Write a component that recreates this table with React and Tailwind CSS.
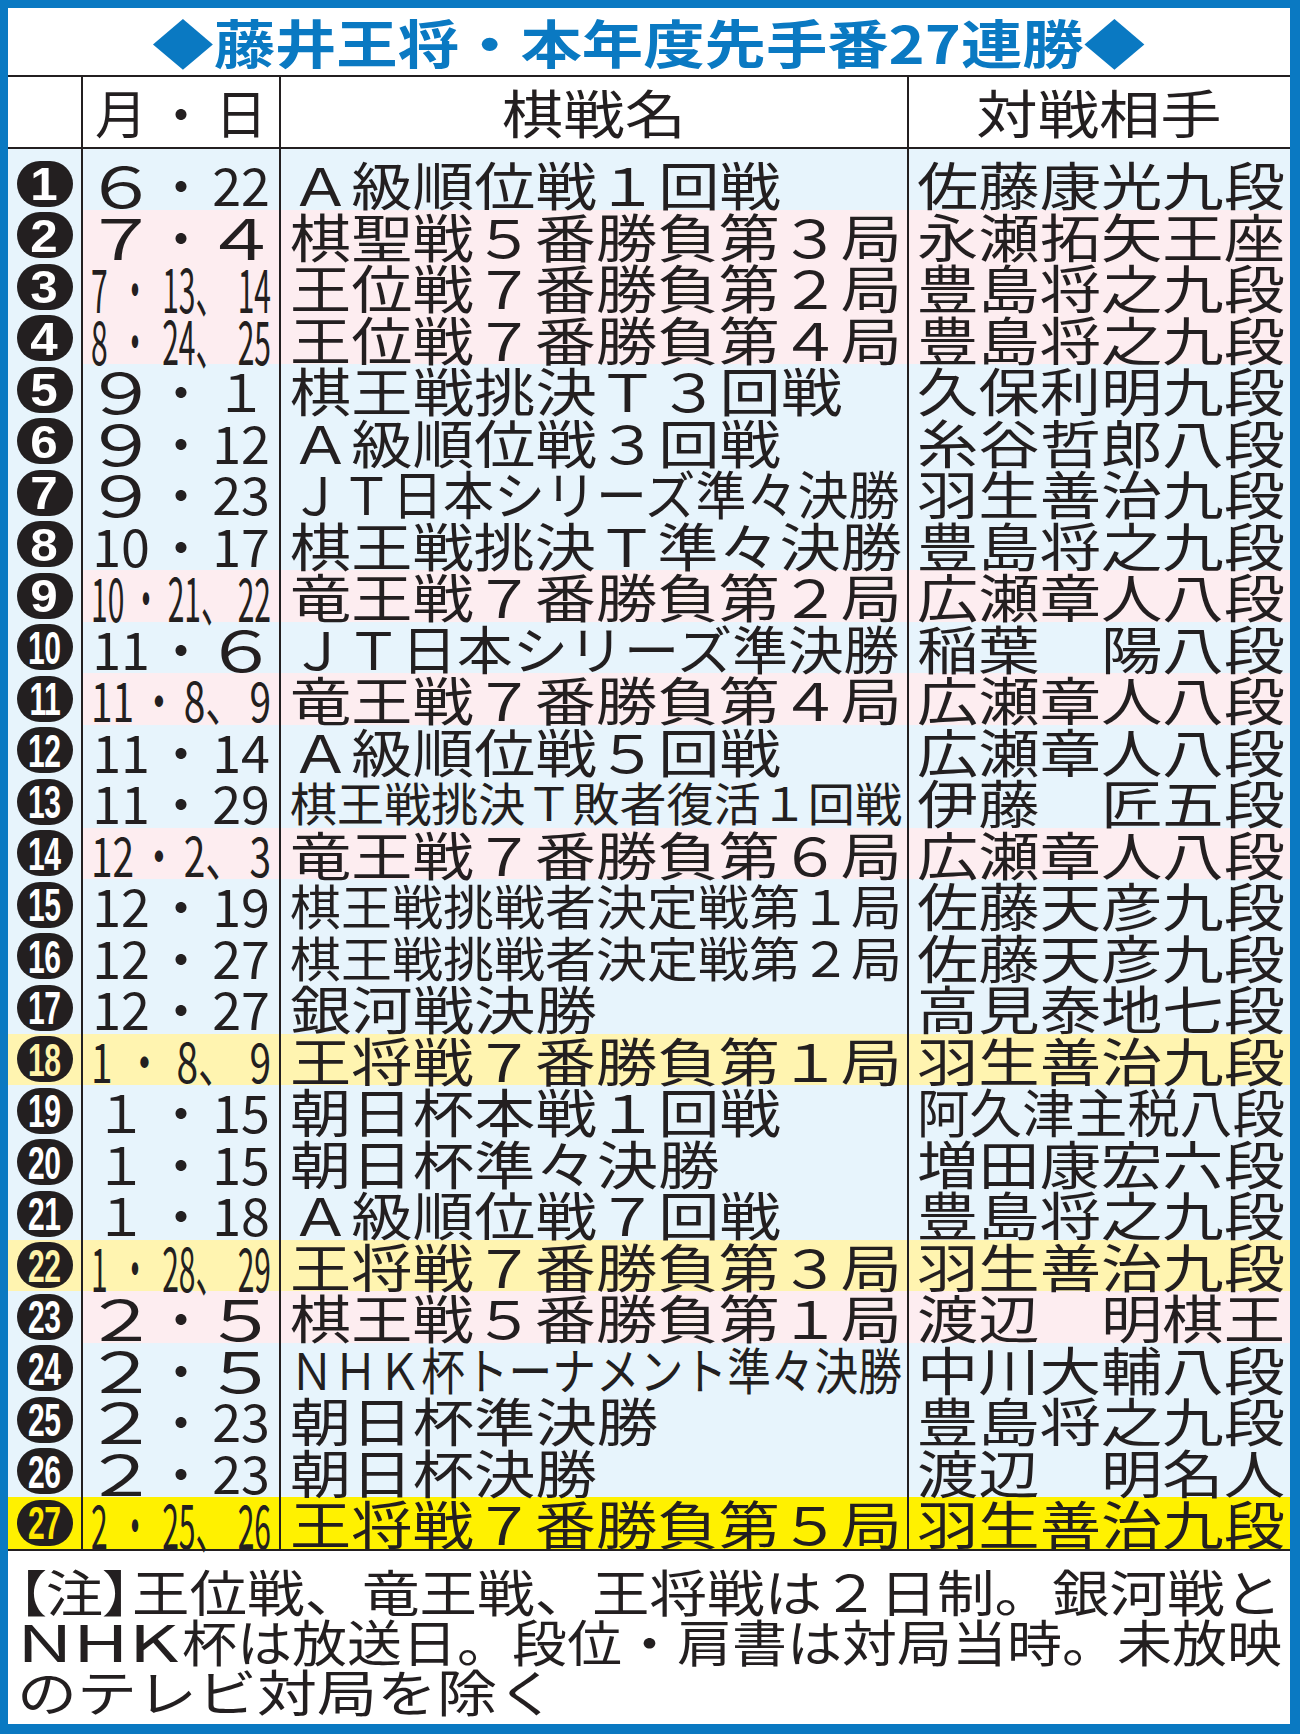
import React from "react";

const ROWS = [
  { n: 1, d: ["６", "22"], e: "Ａ級順位戦１回戦", o: "佐藤康光九段" },
  { n: 2, d: ["７", "４"], e: "棋聖戦５番勝負第３局", o: "永瀬拓矢王座", bg: "p" },
  { n: 3, d2: ["7", "13", "14"], k: "t", e: "王位戦７番勝負第２局", o: "豊島将之九段", bg: "p" },
  { n: 4, d2: ["8", "24", "25"], k: "t", e: "王位戦７番勝負第４局", o: "豊島将之九段", bg: "p" },
  { n: 5, d: ["９", "１"], e: "棋王戦挑決Ｔ３回戦", o: "久保利明九段" },
  { n: 6, d: ["９", "12"], e: "Ａ級順位戦３回戦", o: "糸谷哲郎八段" },
  { n: 7, d: ["９", "23"], e: "ＪＴ日本シリーズ準々決勝", o: "羽生善治九段" },
  { n: 8, d: ["10", "17"], e: "棋王戦挑決Ｔ準々決勝", o: "豊島将之九段" },
  { n: 9, d2: ["10", "21", "22"], k: "t", e: "竜王戦７番勝負第２局", o: "広瀬章人八段", bg: "p" },
  { n: 10, d: ["11", "６"], e: "ＪＴ日本シリーズ準決勝", o: "稲葉　陽八段" },
  { n: 11, d2: ["11", "8", "9"], k: "m", e: "竜王戦７番勝負第４局", o: "広瀬章人八段", bg: "p" },
  { n: 12, d: ["11", "14"], e: "Ａ級順位戦５回戦", o: "広瀬章人八段" },
  { n: 13, d: ["11", "29"], e: "棋王戦挑決Ｔ敗者復活１回戦", fs: 46, o: "伊藤　匠五段" },
  { n: 14, d2: ["12", "2", "3"], k: "m", e: "竜王戦７番勝負第６局", o: "広瀬章人八段", bg: "p" },
  { n: 15, d: ["12", "19"], e: "棋王戦挑戦者決定戦第１局", fs: 48, o: "佐藤天彦九段" },
  { n: 16, d: ["12", "27"], e: "棋王戦挑戦者決定戦第２局", fs: 48, o: "佐藤天彦九段" },
  { n: 17, d: ["12", "27"], e: "銀河戦決勝", o: "高見泰地七段" },
  { n: 18, d2: ["1", "8", "9"], k: "m", e: "王将戦７番勝負第１局", o: "羽生善治九段", bg: "y" },
  { n: 19, d: ["１", "15"], e: "朝日杯本戦１回戦", o: "阿久津主税八段" },
  { n: 20, d: ["１", "15"], e: "朝日杯準々決勝", o: "増田康宏六段" },
  { n: 21, d: ["１", "18"], e: "Ａ級順位戦７回戦", o: "豊島将之九段" },
  { n: 22, d2: ["1", "28", "29"], k: "t", e: "王将戦７番勝負第３局", o: "羽生善治九段", bg: "y" },
  { n: 23, d: ["２", "５"], e: "棋王戦５番勝負第１局", o: "渡辺　明棋王", bg: "p" },
  { n: 24, d: ["２", "５"], e: "ＮＨＫ杯トーナメント準々決勝", fs: 50, o: "中川大輔八段" },
  { n: 25, d: ["２", "23"], e: "朝日杯準決勝", o: "豊島将之九段" },
  { n: 26, d: ["２", "23"], e: "朝日杯決勝", o: "渡辺　明名人" },
  { n: 27, d2: ["2", "25", "26"], k: "t", e: "王将戦７番勝負第５局", o: "羽生善治九段", bg: "Y" },
];

const BG = {
  b: "bg-[#e7f4fc]",
  p: "bg-[#fdedf0]",
  y: "bg-[#fff4b0]",
  Y: "bg-[#fff100]",
};

const FS = {
  46: "text-[46px]",
  48: "text-[48px]",
  50: "text-[50px]",
  52: "text-[52px]",
};

const KIND = {
  t: "w-[360px] scale-x-[0.5] text-[60px]",
  m: "w-[250px] scale-x-[0.72] text-[54px]",
};

const GRID = "grid grid-cols-[73px_198px_628px_383px]";
const LINE = "border-l-2 border-[#231f20]";

function Circle({ n, bg }) {
  const numColor =
    bg === "Y" ? "text-[#ffe800]" : bg === "y" ? "text-[#fff3a8]" : "text-white";
  const squeeze = n >= 10 ? "scale-x-[0.64] tracking-[-1px]" : "scale-x-[1.05]";
  return (
    <div className="flex h-full items-center justify-center">
      <div className="flex h-[46px] w-[56px] items-center justify-center overflow-visible rounded-full bg-[#231f20]">
        <span
          className={`inline-block font-['Liberation_Sans',sans-serif] text-[47px] font-bold leading-none ${numColor} ${squeeze}`}
        >
          {n}
        </span>
      </div>
    </div>
  );
}

function Slot({ c, plain }) {
  const wide = !plain && c.length === 1 && c !== "１";
  return (
    <span className="flex justify-center">
      {wide ? <span className="inline-block scale-x-[1.45] scale-y-[1.08]">{c}</span> : c}
    </span>
  );
}

function DateA({ m, d, plain }) {
  return (
    <div className="grid h-full grid-cols-3 items-center px-2 text-[52px] leading-[51.5px]">
      <Slot c={m} plain={plain} />
      <span className="flex justify-center">・</span>
      <Slot c={d} plain={plain} />
    </div>
  );
}

function DateB({ m, d1, d2, k }) {
  return (
    <div className="flex h-full items-center px-2 leading-[51.5px]">
      <div className={`flex shrink-0 origin-left items-center justify-between ${KIND[k]}`}>
        <span>{m}</span>
        <span>・</span>
        <span>{d1}、</span>
        <span>{d2}</span>
      </div>
    </div>
  );
}

function Fit({ text, fs, avail, max }) {
  const s = Math.min(max, avail / (text.length * fs));
  return (
    <span
      className={`inline-block origin-left whitespace-nowrap ${FS[fs]}`}
      style={{ transform: `scaleX(${s})` }}
    >
      {text}
    </span>
  );
}

function Row({ r }) {
  const bg = r.bg || "b";
  const c1 = bg === "y" || bg === "Y" ? BG[bg] : BG.b;
  const cx = BG[bg];
  return (
    <div className={`${GRID} h-[51.5px]`}>
      <div className={c1}>
        <Circle n={r.n} bg={bg} />
      </div>
      <div className={`${LINE} ${cx}`}>
        {r.d ? <DateA m={r.d[0]} d={r.d[1]} /> : <DateB m={r.d2[0]} d1={r.d2[1]} d2={r.d2[2]} k={r.k} />}
      </div>
      <div className={`${LINE} ${cx} flex items-center pl-[9px] leading-[51.5px]`}>
        <Fit text={r.e} fs={r.fs || 52} avail={612} max={1.18} />
      </div>
      <div className={`${LINE} ${cx} flex items-center pl-[8px] leading-[51.5px]`}>
        <Fit text={r.o} fs={52} avail={368} max={1.18} />
      </div>
    </div>
  );
}

export default function App() {
  return (
    <div className="h-[1734px] w-[1300px] bg-[#0a79c2] pb-[10px] pl-[8px] pr-[10px] pt-[8px]">
      <div className="flex h-full flex-col overflow-hidden bg-white font-['Noto_Sans_CJK_JP',sans-serif] text-[#231f20]">
        {/* title */}
        <div className="flex h-[69px] shrink-0 items-center justify-center border-b-2 border-[#231f20]">
          <span className="inline-block scale-x-[1.18] whitespace-nowrap text-[52px] font-bold leading-none text-[#0a79c2]">
            ◆藤井王将・本年度先手番27連勝◆
          </span>
        </div>
        {/* header */}
        <div className={`${GRID} h-[72px] shrink-0 border-b-2 border-[#231f20] bg-white`}>
          <div />
          <div className={`${LINE}`}>
            <DateA m="月" d="日" plain />
          </div>
          <div className={`${LINE} flex items-center justify-center text-[52px] leading-[70px]`}>
            <span className="inline-block scale-x-[1.18]">棋戦名</span>
          </div>
          <div className={`${LINE} flex items-center justify-center text-[52px] leading-[70px]`}>
            <span className="inline-block scale-x-[1.18]">対戦相手</span>
          </div>
        </div>
        {/* body */}
        <div className="shrink-0">
          <div className={`${GRID} h-[9px]`}>
            <div className={BG.b} />
            <div className={`${LINE} ${BG.b}`} />
            <div className={`${LINE} ${BG.b}`} />
            <div className={`${LINE} ${BG.b}`} />
          </div>
          {ROWS.map((r) => (
            <Row key={r.n} r={r} />
          ))}
        </div>
        {/* note */}
        <div className="flex-1 border-t-2 border-[#231f20] pl-[9px] pt-[14px] text-[50px] leading-[50px]">
          <div className="whitespace-nowrap">
            <span className="inline-block origin-left scale-x-[1.15]">
              <span className="[font-feature-settings:'palt']">【注】</span>王位戦、竜王戦、王将戦は２日制。銀河戦と
            </span>
          </div>
          <div className="whitespace-nowrap">
            <span className="inline-block origin-left scale-x-[1.1]">
              <span className="inline-block w-[150px]">
                <span className="inline-block origin-left scale-x-[1.4]">NHK</span>
              </span>
              杯は放送日。段位・肩書は対局当時。未放映
            </span>
          </div>
          <div className="whitespace-nowrap">
            <span className="inline-block origin-left scale-x-[1.2]">のテレビ対局を除く</span>
          </div>
        </div>
      </div>
    </div>
  );
}
